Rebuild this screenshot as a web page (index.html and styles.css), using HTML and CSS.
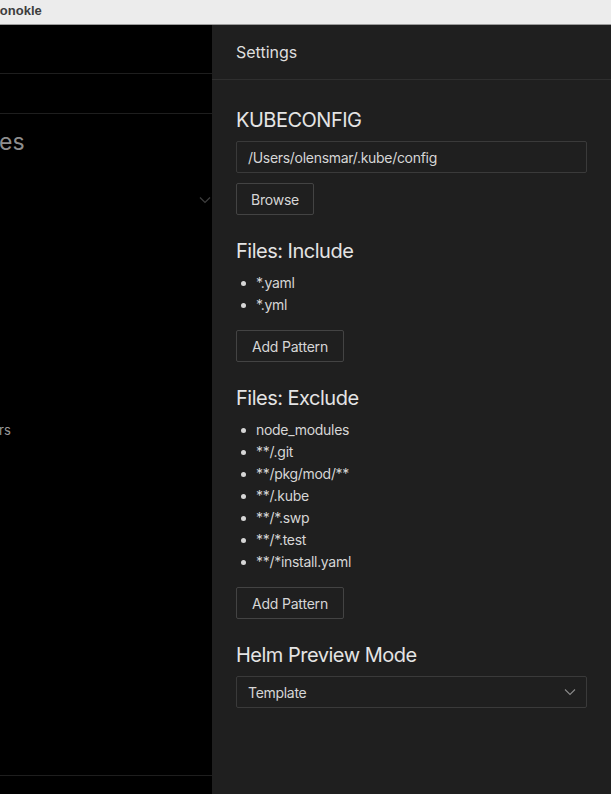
FILE: index.html
```html
<!DOCTYPE html>
<html>
<head>
<meta charset="utf-8">
<link rel="stylesheet" href="styles.css">
</head>
<body>
<div class="titlebar"><span class="title">Monokle</span></div>
<div class="main">
  <div class="left">
    <div class="lrow lrow1"></div>
    <div class="lrow lrow2"></div>
    <div class="lbody">
      <div class="bigtext">es</div>
      <div class="chev-row">
        <svg width="12" height="8" viewBox="0 0 12 8"><path d="M1 1.5 L6 6.5 L11 1.5" fill="none" stroke="#3e3e3e" stroke-width="1.2"/></svg>
      </div>
      <div class="smalltext">rs</div>
    </div>
    <div class="lfoot"></div>
  </div>
  <div class="panel">
    <div class="phead">Settings</div>
    <div class="pbody">
      <h2 class="sh">KUBECONFIG</h2>
      <div class="input">/Users/olensmar/.kube/config</div>
      <div class="btn btn-browse">Browse</div>

      <h2 class="sh sh-gap">Files: Include</h2>
      <ul class="list">
        <li>*.yaml</li>
        <li>*.yml</li>
      </ul>
      <div class="btn btn-add">Add Pattern</div>

      <h2 class="sh sh-gap">Files: Exclude</h2>
      <ul class="list">
        <li>node_modules</li>
        <li>**/.git</li>
        <li>**/pkg/mod/**</li>
        <li>**/.kube</li>
        <li>**/*.swp</li>
        <li>**/*.test</li>
        <li>**/*install.yaml</li>
      </ul>
      <div class="btn btn-add">Add Pattern</div>

      <h2 class="sh sh-gap">Helm Preview Mode</h2>
      <div class="input select">
        <span>Template</span>
        <svg width="12" height="8" viewBox="0 0 12 8"><path d="M1 1.5 L6 6.5 L11 1.5" fill="none" stroke="#8a8a8a" stroke-width="1.1"/></svg>
      </div>
    </div>
  </div>
</div>
</body>
</html>
```

FILE: styles.css
```css
* { box-sizing: border-box; }
html, body { margin: 0; padding: 0; }
body {
  width: 611px;
  height: 794px;
  overflow: hidden;
  background: #000;
  font-family: Inter, "Liberation Sans", sans-serif;
  display: flex;
  flex-direction: column;
}
.titlebar {
  height: 25px;
  flex: none;
  background: #ececec;
  border-bottom: 1px solid #9c9c9c;
  overflow: hidden;
  display: flex;
  align-items: center;
}
.title {
  font-family: "Liberation Sans", sans-serif;
  font-weight: bold;
  font-size: 13px;
  color: #3d3d3d;
  margin-left: -11px;
  margin-top: -4px;
}
.main {
  flex: 1;
  display: flex;
  min-height: 0;
}
.left {
  width: 212px;
  flex: none;
  background: #000;
  display: flex;
  flex-direction: column;
  overflow: hidden;
}
.lrow { border-bottom: 1px solid #1e1e1e; flex: none; }
.lrow1 { height: 49px; }
.lrow2 { height: 40px; }
.lbody { flex: 1; }
.bigtext {
  font-size: 23px;
  color: #8e8e8e;
  margin-top: 14px;
  margin-left: -1px;
  line-height: 28px;
}
.chev-row {
  display: flex;
  justify-content: flex-end;
  padding-right: 1px;
  margin-top: 40px;
  height: 10px;
}
.smalltext {
  font-size: 13px;
  color: #9a9a9a;
  margin-top: 216px;
  margin-left: -1px;
  line-height: 16px;
}
.lfoot {
  height: 19px;
  flex: none;
  border-top: 1px solid #1e1e1e;
}
.panel {
  flex: 1;
  background: #1f1f1f;
  display: flex;
  flex-direction: column;
  color: #dcdcdc;
}
.phead {
  height: 55px;
  flex: none;
  border-bottom: 1px solid #2f2f2f;
  padding-left: 24px;
  display: flex;
  align-items: center;
  font-size: 16px;
  color: #dedede;
}
.pbody {
  padding: 28px 24px 0 24px;
  display: flex;
  flex-direction: column;
  align-items: flex-start;
}
.sh {
  margin: 0 0 9px 0;
  font-weight: normal;
  font-size: 20px;
  line-height: 24px;
  letter-spacing: -0.5px;
  color: #e4e4e4;
}
.sh-gap { margin-top: 24px; }
.input {
  width: 351px;
  height: 32px;
  border: 1px solid #3a3a3a;
  border-radius: 2px;
  padding: 0 11px;
  display: flex;
  align-items: center;
  font-size: 14px;
  letter-spacing: -0.3px;
  color: #d6d6d6;
}
.select { justify-content: space-between; padding-right: 10px; }
.btn {
  height: 32px;
  border: 1px solid #434343;
  border-radius: 2px;
  display: flex;
  align-items: center;
  justify-content: center;
  font-size: 14px;
  letter-spacing: -0.2px;
  color: #d6d6d6;
}
.btn-browse { width: 78px; margin-top: 10px; }
.btn-add { width: 108px; margin-top: 14px; }
.list {
  margin: 0;
  padding: 0 0 0 20px;
  list-style: none;
}
.list li {
  font-size: 14px;
  line-height: 22px;
  letter-spacing: -0.3px;
  color: #d6d6d6;
  position: relative;
}
.list li::before {
  content: "";
  position: absolute;
  left: -15px;
  top: 9px;
  width: 5px;
  height: 5px;
  border-radius: 50%;
  background: #d6d6d6;
}
```
